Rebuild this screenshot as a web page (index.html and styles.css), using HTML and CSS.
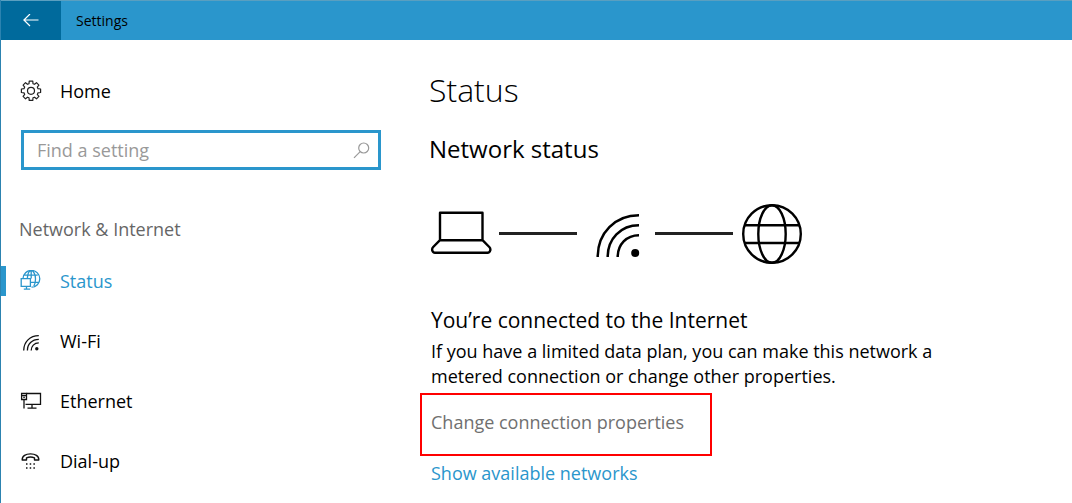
FILE: index.html
```html
<!DOCTYPE html>
<html lang="en">
<head>
    <meta charset="utf-8">
    <meta name="viewport" content="width=device-width, initial-scale=1">
    <title>Settings</title>
    <link rel="stylesheet" href="styles.css">
</head>
<body>
    <header class="titlebar">
        <button class="back-button" aria-label="Back">
            <svg width="16" height="14" viewBox="0 0 16 14" fill="none" stroke="#fff" stroke-width="1.2"><path d="M15.5 6H1M7 0L.9 6 7 12"/></svg>
        </button>
        <span class="titlebar-text">Settings</span>
    </header>

    <div class="layout">
        <aside class="sidebar">
            <a class="nav-item" href="#home">
                <svg class="nav-icon" viewBox="0 0 22 22" fill="none" stroke="#222" stroke-width="1.2" stroke-linejoin="round"><path d="M9.2 1.2h3.6l.2 2.5 1.5.6 2-1.6 2.4 2.4-1.6 2 .7 1.6 2.6.3v3.5l-2.6.3-.7 1.6 1.6 2-2.4 2.4-2-1.6-1.5.6-.2 2.6H9.2L9 17.8l-1.5-.6-2 1.6-2.4-2.4 1.6-2-.7-1.6-2.6-.3V9l2.6-.3.7-1.6-1.6-2 2.4-2.4 2 1.6L9 3.7z"/><circle cx="11" cy="10.8" r="3.5"/></svg>
                <span>Home</span>
            </a>

            <form class="search">
                <input class="search-input" type="text" placeholder="Find a setting" aria-label="Find a setting">
                <svg class="search-icon" width="17" height="17" viewBox="0 0 17 17" fill="none" stroke="#999" stroke-width="1.2"><circle cx="10.7" cy="6" r="5"/><path d="M7.2 9.6L1 15.8"/></svg>
            </form>

            <h2 class="section-name">Network &amp; Internet</h2>

            <nav>
                <a class="nav-item active" href="#status">
                    <svg class="nav-icon" viewBox="0 0 22 22" fill="none" stroke="#2a96cc" stroke-width="1.3"><path d="M3 8.6A8.4 8.4 0 1 1 11.500 17.200M4.300 5.200h13.400M10.500 12.300h8.300M7.300 8.600c.3-4.500 1.800-8 4-8s4.200 4 4.200 8.400c0 3-.6 5.500-1.700 7.100M11.200.6v8"/><path d="M1.200 8.600h9.200v7.800H1.200zM6.500 16.400v3.200M3.800 19.200h6.400"/></svg>
                    <span>Status</span>
                </a>
                <a class="nav-item" href="#wifi">
                    <svg class="nav-icon" viewBox="0 0 22 22" fill="none" stroke="#111" stroke-width="1.3"><path d="M3.700 20.500C3.700 12 10 5.600 18.800 5.600M7.400 20.500C7.400 14 12 9.300 18.800 9.300M11.200 20.500c0-4.200 3-7.600 7.600-7.600"/><circle cx="16.800" cy="18.800" r="1.700" fill="#111" stroke="none"/></svg>
                    <span>Wi-Fi</span>
                </a>
                <a class="nav-item" href="#ethernet">
                    <svg class="nav-icon" viewBox="0 0 22 22" fill="none" stroke="#111" stroke-width="1.3"><path d="M6.500 3.500h14v10.900H5.500M12 14.500v3.500M7.500 18.200h9M4 9.500v8.900"/><path d="M1.600 3.500h4.900v6H1.600zM2 5.600h4.200M3.300 7.400h1.500"/></svg>
                    <span>Ethernet</span>
                </a>
                <a class="nav-item" href="#dialup">
                    <svg class="nav-icon" viewBox="0 0 22 22" fill="none" stroke="#111" stroke-width="1.4"><path d="M2.200 10c-.3-4.200 3.800-6.100 8.300-6.100s8.600 1.900 8.300 6.100h-4.300V7.800c-2.300-.9-5.700-.9-8 0V10z" stroke-linejoin="round"/><path d="M6 14h9M6 18h9" stroke-dasharray="1.500 2.200" stroke-width="1.500"/></svg>
                    <span>Dial-up</span>
                </a>
            </nav>
        </aside>

        <main class="content">
            <h1 class="page-title">Status</h1>
            <h2 class="sub-title">Network status</h2>

            <div class="diagram">
                <svg width="62" height="60" viewBox="-1 0 62 60" fill="none" stroke="#000" stroke-width="2.4"><path d="M9 8.700h42.500v27.500H9zM9 36.200L2.200 43q-1.500 1.600-.9 3.600.5 2.200 2.700 2.200h52.500q2.200 0 2.700-2.200.6-2-.9-3.600l-6.800-6.800" stroke-linejoin="round"/></svg>
                <span class="link-line"></span>
                <svg class="wifi-large" width="44" height="60" viewBox="0 0 44 60" fill="none" stroke="#000" stroke-width="2.5"><path d="M1.700 53C1.700 29 19 11.300 43 11.300M11.700 53c0-18 12.800-31.700 31.300-31.700M21.700 53c0-12.500 8.800-21.700 21.300-21.700"/><circle cx="39.200" cy="49" r="4" fill="#000" stroke="none"/></svg>
                <span class="link-line"></span>
                <svg width="62" height="60" viewBox="-2 0 62 60" fill="none" stroke="#000" stroke-width="2.4"><circle cx="30" cy="30" r="28.800"/><ellipse cx="30" cy="30" rx="13.700" ry="28.800"/><path d="M3 21.200h54M3 39h54"/></svg>
            </div>

            <div class="details">
                <h3 class="details-title">You’re connected to the Internet</h3>
                <p class="details-text">If you have a limited data plan, you can make this network a metered connection or change other properties.</p>
            </div>
            <div class="highlight">
                <a class="muted-link" href="#properties">Change connection properties</a>
            </div>
            <a class="blue-link" href="#networks">Show available networks</a>
        </main>
    </div>
</body>
</html>
```
FILE: styles.css
```css
* {
    box-sizing: border-box;
}

body {
    margin: 0;
    min-height: 100vh;
    background-color: white;
    color: black;
    font-family: "Open Sans", "Noto Sans", sans-serif;
    font-size: 18px;
    border-left: 1px solid #2c83b0;
}

h1, h2, h3, p {
    margin: 0;
    font-weight: normal;
}

a {
    text-decoration: none;
}

.titlebar {
    display: flex;
    align-items: center;
    height: 40px;
    border-top: 1px solid #5a9fc0;
    background-color: #2a96cc;
}

.back-button {
    display: flex;
    align-items: center;
    justify-content: center;
    width: 60px;
    height: 100%;
    padding: 0;
    border: none;
    background-color: #006a9c;
    cursor: pointer;
}

.titlebar-text {
    margin-left: 15px;
    font-size: 14px;
}

.layout {
    display: flex;
}

.sidebar {
    flex: 0 0 380px;
    padding-top: 21px;
}

.nav-item {
    display: flex;
    align-items: center;
    gap: 18px;
    height: 60px;
    padding-left: 19px;
    color: black;
}

.nav-icon {
    width: 22px;
    height: 22px;
}

.active {
    color: #2a96cc;
    background: linear-gradient(#2a96cc, #2a96cc) left center / 5px 30px no-repeat;
}

.search {
    display: flex;
    align-items: center;
    height: 40px;
    margin: 9px 0 0 20px;
    padding: 0 8px 0 13px;
    border: 3px solid #2a96cc;
}

.search-input {
    flex: 1;
    min-width: 0;
    padding: 0;
    border: none;
    outline: none;
    background-color: transparent;
    font-family: inherit;
    font-size: 18px;
}

.search-input::placeholder {
    color: #999;
}

.section-name {
    margin: 44px 0 6px 18px;
    font-size: 18px;
    line-height: 31px;
    color: #666;
}

.content {
    flex: 1;
    min-width: 0;
    padding: 26px 48px 16px;
}

.page-title {
    font-size: 32px;
    font-weight: 300;
    line-height: 48px;
}

.sub-title {
    margin-top: 19px;
    font-size: 24px;
    line-height: 32px;
}

.diagram {
    display: flex;
    align-items: center;
    gap: 7px;
    margin: 39px 0 0 1px;
}

.link-line {
    width: 78px;
    height: 3px;
    margin-bottom: 1px;
    background-color: #222;
}

.wifi-large {
    margin: 0 8px 0 12px;
}

.details {
    max-width: 520px;
    margin-top: 40px;
    padding-left: 2px;
}

.details-title {
    font-size: 21px;
    line-height: 32px;
}

.details-text {
    margin-top: 3px;
    font-size: 18px;
    line-height: 25px;
}

.highlight {
    max-width: 292px;
    margin: 4px 0 0 -9px;
    padding: 15px 9px 19px;
    border: 2px solid red;
    line-height: 25px;
}

.muted-link {
    color: #707070;
    white-space: nowrap;
}

.blue-link {
    display: inline-block;
    margin: 5px 0 0 2px;
    line-height: 25px;
    color: #2a96cc;
}
```
